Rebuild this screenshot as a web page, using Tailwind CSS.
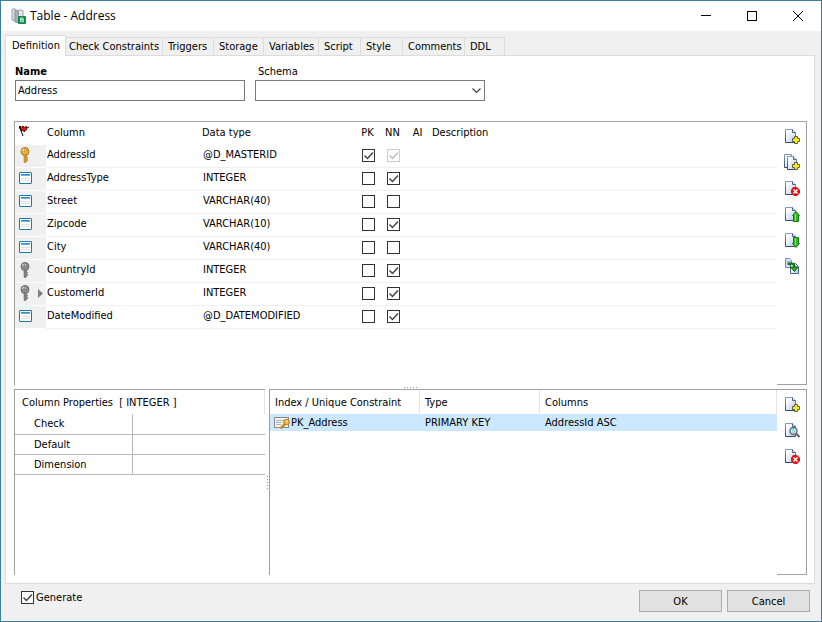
<!DOCTYPE html>
<html lang="en">
<head>
    <meta charset="UTF-8">
    <meta name="viewport" content="width=device-width, initial-scale=1.0">
    <title>Table - Address</title>
    <script src="https://cdn.jsdelivr.net/npm/@tailwindcss/browser@4"></script>
</head>
<body class="bg-[#f0f0f0] text-black text-[11px] leading-[14px] font-['Tahoma','DejaVu_Sans_Condensed','DejaVu_Sans',sans-serif]">
    <!-- Icon sprite -->
    <svg class="absolute w-0 h-0" aria-hidden="true">
        <defs>
            <linearGradient id="paper" x1="0" y1="0" x2="1" y2="1">
                <stop offset="0.2" stop-color="#ffffff"/>
                <stop offset="1" stop-color="#b4c6ee"/>
            </linearGradient>
            <linearGradient id="edge" x1="0" y1="0" x2="0" y2="1">
                <stop offset="0" stop-color="#8299bb"/>
                <stop offset="1" stop-color="#2f4a70"/>
            </linearGradient>
            <linearGradient id="bar" x1="0" y1="0" x2="0" y2="1">
                <stop offset="0" stop-color="#1c7cc4"/>
                <stop offset="1" stop-color="#7cc0ee"/>
            </linearGradient>
        </defs>
        <symbol id="page" viewBox="0 0 16 16">
            <path d="M1.5 1.5H8.5L11.5 4.5V14.5H1.5Z" fill="url(#paper)" stroke="url(#edge)"/>
            <path d="M8.5 1.5V4.5H11.5" fill="#dfe8f8" stroke="#4a6488"/>
        </symbol>
        <symbol id="plus" viewBox="0 0 16 16">
            <path d="M10.5 8.5h3v2h2v3h-2v2h-3v-2h-2v-3h2z" fill="#fff" stroke="#5c5a38"/>
            <path d="M12 9v6M9 12h6" stroke="#f8f000" stroke-width="2"/>
        </symbol>
        <symbol id="cross" viewBox="0 0 16 16">
            <path d="M9 7h4l3 3v3l-3 3H10l-3-3v-3z" fill="#e81010"/>
            <path d="M9.5 9.5l4 4M13.500 9.500l-4 4" stroke="#fff" stroke-width="1.5"/>
        </symbol>
        <symbol id="i-add" viewBox="0 0 16 16"><use href="#page"/><use href="#plus"/></symbol>
        <symbol id="i-copy" viewBox="0 0 16 16">
            <path d="M0.5 0.5H7.5V13.5H0.5Z" fill="url(#paper)" stroke="url(#edge)"/>
            <path d="M3.5 2.5H9.5L12.5 5.5V15.5H3.5Z" fill="url(#paper)" stroke="url(#edge)"/>
            <path d="M9.5 2.5V5.5H12.5" fill="#dfe8f8" stroke="#4a6488"/>
            <use href="#plus"/>
        </symbol>
        <symbol id="i-delete" viewBox="0 0 16 16"><use href="#page"/><use href="#cross"/></symbol>
        <symbol id="i-up" viewBox="0 0 16 16">
            <use href="#page"/>
            <path d="M12 5.5L15.5 9.5H14.5V15.5H9.5V9.5H8.5Z" fill="#34b822" stroke="#157a12"/>
            <path d="M11.5 8V15" stroke="#8ae070"/>
        </symbol>
        <symbol id="i-down" viewBox="0 0 16 16">
            <use href="#page"/>
            <path d="M12 15.5L15.5 11.5H14.5V5.5H9.5V11.5H8.5Z" fill="#34b822" stroke="#157a12"/>
            <path d="M11.5 6V13" stroke="#8ae070"/>
        </symbol>
        <symbol id="i-swap" viewBox="0 0 16 16">
            <path d="M1.5 0.5H5.5L7.5 2.5V9.5H1.5Z" fill="#dbe6fa" stroke="#7088b4"/>
            <path d="M3 4h3M3 6h3" stroke="#3a78d8"/>
            <path d="M6.5 5.5H11.5L14.5 8.5V15.5H6.5Z" fill="url(#paper)" stroke="#4a6488"/>
            <path d="M4 6.5C8 4.5 10.5 6 10.5 9" fill="none" stroke="#157a12" stroke-width="2.5"/>
            <path d="M6.5 9H14L10.5 13.5Z" fill="#2fae20" stroke="#126010"/>
        </symbol>
        <symbol id="i-find" viewBox="0 0 16 16">
            <use href="#page"/>
            <circle cx="9.5" cy="9" r="3.5" fill="#c8f0f4" stroke="#667078" stroke-width="1.5"/>
            <path d="M8 9l2-2M9 11l2-2" stroke="#38c4d0"/>
            <path d="M12 11.5L15.5 15" stroke="#606468" stroke-width="2"/>
        </symbol>
        <symbol id="i-field" viewBox="0 0 13 12">
            <rect x="0.5" y="0.5" width="12" height="11" rx="0.5" fill="#fff" stroke="#1a78b0"/>
            <rect x="2" y="2" width="9" height="2" fill="url(#bar)"/>
            <path d="M2 6.5h9M2 8.5h9" stroke="#e0e0e0"/>
        </symbol>
        <symbol id="i-key" viewBox="0 0 10 16">
            <circle cx="5" cy="4.5" r="4" fill="#e8ae3c" stroke="#b07c20"/>
            <path d="M2.5 4a2.5 2.5 0 0 1 2-2.2" fill="none" stroke="#fbe6a8" stroke-width="1.2"/>
            <circle cx="5.5" cy="3" r="1.1" fill="#fff" stroke="#946414" stroke-width="0.6"/>
            <path d="M4 8h2.5v2h1v1h-1v1.2h1.2v1.3H6.5V15L5.2 16 4 15Z" fill="#d89a28" stroke="#a87018" stroke-width="0.5"/>
        </symbol>
        <symbol id="i-fkey" viewBox="0 0 10 16">
            <circle cx="5" cy="4.5" r="4" fill="#8c8c8c" stroke="#6a6a6a"/>
            <path d="M2.5 4a2.5 2.5 0 0 1 2-2.2" fill="none" stroke="#d0d0d0" stroke-width="1.2"/>
            <circle cx="5.5" cy="3" r="1.1" fill="#fff" stroke="#555" stroke-width="0.6"/>
            <path d="M4 8h2.5v2h1v1h-1v1.2h1.2v1.3H6.5V15L5.2 16 4 15Z" fill="#808080" stroke="#606060" stroke-width="0.5"/>
        </symbol>
        <symbol id="i-tick" viewBox="0 0 13 13">
            <path d="M2.5 6.5L5.5 9.5L11 3.5" fill="none" stroke="currentColor" stroke-width="1.5"/>
        </symbol>
    </svg>

    <div class="min-h-screen flex flex-col border border-[#3c7f9f]">
        <header class="h-[30px] flex items-center bg-white pl-2.5">
            <svg class="w-4 h-4 mr-[3px]" viewBox="0 0 16 16">
                <path d="M1 1.5q2-1.500 4 0v10.500q-2 1-4 0z" fill="#d4d8e0" stroke="#9aa0ae"/>
                <path d="M4 3q2-1.500 4 0v11q-2 1-4 0z" fill="#a8aebc" stroke="#8c93a4"/>
                <path d="M7.5 2.500q2-1.500 4.500 0v9H7.5z" fill="#e4e7ee" stroke="#9aa0ae"/>
                <rect x="7" y="8" width="8" height="8" rx="1" fill="#12894a"/>
                <path d="M9.5 10h2.500v1.700H9.500zM9.500 11.700h3v2h-3z" fill="none" stroke="#c8ecd4"/>
            </svg>
            <h1 class="text-[12px] leading-4 font-['Segoe_UI','Open_Sans',sans-serif]">Table - Address</h1>
            <div class="ml-auto flex">
                <button type="button" aria-label="Minimize" class="w-[46px] h-[30px] grid place-items-center">
                    <svg class="w-2.5 h-2.5" viewBox="0 0 10 10"><path d="M0 4.5h10" stroke="#000"/></svg>
                </button>
                <button type="button" aria-label="Maximize" class="w-[46px] h-[30px] grid place-items-center">
                    <svg class="w-2.5 h-2.5" viewBox="0 0 10 10"><rect x="0.5" y="0.5" width="9" height="9" fill="none" stroke="#000"/></svg>
                </button>
                <button type="button" aria-label="Close" class="w-[46px] h-[30px] grid place-items-center">
                    <svg class="w-2.5 h-2.5" viewBox="0 0 10 10"><path d="M0 0l10 10M10 0L0 10" stroke="#000"/></svg>
                </button>
            </div>
        </header>

        <main class="flex-1 flex flex-col pt-1 pl-1 pr-1.5">
            <nav class="relative flex items-end -mb-px" role="tablist">
                <button type="button" role="tab" aria-selected="true" class="w-[61px] h-[21px] pl-1.5 pb-px text-left bg-white border border-b-0 border-[#dcdcdc]">Definition</button>
                <button type="button" role="tab" class="w-[97px] h-[18px] mb-px pl-[3px] pt-px text-left whitespace-nowrap border-t border-r border-[#dcdcdc]">Check Constraints</button>
                <button type="button" role="tab" class="w-[51px] h-[18px] mb-px pl-[5px] pt-px text-left border-t border-r border-[#dcdcdc]">Triggers</button>
                <button type="button" role="tab" class="w-[50px] h-[18px] mb-px pl-[5px] pt-px text-left border-t border-r border-[#dcdcdc]">Storage</button>
                <button type="button" role="tab" class="w-[55px] h-[18px] mb-px pl-[5px] pt-px text-left border-t border-r border-[#dcdcdc]">Variables</button>
                <button type="button" role="tab" class="w-[42px] h-[18px] mb-px pl-[5px] pt-px text-left border-t border-r border-[#dcdcdc]">Script</button>
                <button type="button" role="tab" class="w-[42px] h-[18px] mb-px pl-[5px] pt-px text-left border-t border-r border-[#dcdcdc]">Style</button>
                <button type="button" role="tab" class="w-[62px] h-[18px] mb-px pl-[5px] pt-px text-left border-t border-r border-[#dcdcdc]">Comments</button>
                <button type="button" role="tab" class="w-[40px] h-[18px] mb-px pl-[5px] pt-px text-left border-t border-r border-[#dcdcdc]">DDL</button>
            </nav>

            <section class="flex-1 flex flex-col bg-white border border-[#dcdcdc] pt-2 pb-2 pl-2 pr-[7px]">
                <div class="flex gap-2.5 pl-px mb-5">
                    <div class="w-[230px]">
                        <label for="name" class="block h-4 pt-px font-bold">Name</label>
                        <input id="name" type="text" value="Address" class="block w-full h-[21px] px-0.5 bg-white border border-[#7a7a7a] outline-none">
                    </div>
                    <div class="w-[230px]">
                        <label for="schema" class="block h-4 pt-px pl-[3px]">Schema</label>
                        <div class="relative">
                            <select id="schema" class="block w-full h-[21px] px-0.5 appearance-none bg-white border border-[#7a7a7a] outline-none">
                                <option></option>
                            </select>
                            <svg class="absolute right-1 top-2 w-[9px] h-1.5 pointer-events-none" viewBox="0 0 9 6"><path d="M0.5 0.5l4 4 4-4" fill="none" stroke="#444" stroke-width="1.2"/></svg>
                        </div>
                    </div>
                </div>

                <!-- Columns -->
                <div class="flex-1 flex border-t border-l border-[#a0a0a0]">
                    <div class="flex-1">
                        <table class="w-full table-fixed border-separate border-spacing-0">
                            <colgroup>
                                <col class="w-[31px]">
                                <col class="w-[156px]">
                                <col class="w-[154px]">
                                <col class="w-[25px]">
                                <col class="w-[25px]">
                                <col class="w-[25px]">
                                <col>
                            </colgroup>
                            <thead>
                                <tr class="h-[23px] text-left align-top">
                                    <th class="p-0 pl-1 pt-1">
                                        <svg class="w-2.5 h-2.5" viewBox="0 0 10 10"><path d="M0 0.500L9.500 1L6 5.500L2 4.500Z" fill="#d01818" stroke="#200" stroke-dasharray="2 1"/><path d="M0.5 0.5l3.500 9.500" stroke="#000"/></svg>
                                    </th>
                                    <th class="p-0 pl-px pt-1 font-normal">Column</th>
                                    <th class="p-0 pt-1 font-normal">Data type</th>
                                    <th class="p-0 pr-0.5 pt-1 font-normal text-center">PK</th>
                                    <th class="p-0 pr-0.5 pt-1 font-normal text-center">NN</th>
                                    <th class="p-0 pr-0.5 pt-1 font-normal text-center">AI</th>
                                    <th class="p-0 pl-px pt-1 font-normal">Description</th>
                                </tr>
                            </thead>
                            <tbody id="columns"></tbody>
                        </table>
                    </div>
                    <div class="w-[30px] flex flex-col items-center gap-2.5 pt-1.5 border-r border-b border-[#a0a0a0]">
                        <button type="button" aria-label="Add column"><svg class="block w-4 h-4"><use href="#i-add"/></svg></button>
                        <button type="button" aria-label="Duplicate column"><svg class="block w-4 h-4"><use href="#i-copy"/></svg></button>
                        <button type="button" aria-label="Delete column"><svg class="block w-4 h-4"><use href="#i-delete"/></svg></button>
                        <button type="button" aria-label="Move up"><svg class="block w-4 h-4"><use href="#i-up"/></svg></button>
                        <button type="button" aria-label="Move down"><svg class="block w-4 h-4"><use href="#i-down"/></svg></button>
                        <button type="button" aria-label="Copy from table"><svg class="block w-4 h-4"><use href="#i-swap"/></svg></button>
                    </div>
                </div>

                <div class="h-1 flex items-center justify-center">
                    <svg class="w-[13px] h-px" viewBox="0 0 13 1"><path d="M0 0.5h13" stroke="#909090" stroke-dasharray="1 2"/></svg>
                </div>

                <div class="min-h-[186px] flex">
                    <!-- Column properties -->
                    <div class="w-[251px] border-t border-l border-[#a0a0a0]">
                        <h2 class="h-6 pl-[7px] pt-1.5 border-r border-[#e4e4e4]">Column Properties <span class="ml-[3px]">[ INTEGER ]</span></h2>
                        <table class="w-full table-fixed border-separate border-spacing-0">
                            <tbody>
                                <tr class="h-[21px]">
                                    <th class="w-[118px] p-0 pl-[19px] text-left font-normal border-r border-b border-[#b8b8b8]">Check</th>
                                    <td class="p-0 border-b border-[#b8b8b8]"></td>
                                </tr>
                                <tr class="h-5">
                                    <th class="p-0 pl-[19px] text-left font-normal border-r border-b border-[#b8b8b8]">Default</th>
                                    <td class="p-0 border-b border-[#b8b8b8]"></td>
                                </tr>
                                <tr class="h-5">
                                    <th class="p-0 pl-[19px] text-left font-normal border-r border-b border-[#b8b8b8]">Dimension</th>
                                    <td class="p-0 border-b border-[#b8b8b8]"></td>
                                </tr>
                            </tbody>
                        </table>
                    </div>

                    <div class="w-1 flex items-center justify-center">
                        <svg class="w-px h-[13px]" viewBox="0 0 1 13"><path d="M0.5 0v13" stroke="#909090" stroke-dasharray="1 2"/></svg>
                    </div>

                    <!-- Indexes -->
                    <div class="flex-1 flex border-t border-l border-[#a0a0a0]">
                        <div class="flex-1">
                            <table class="w-full table-fixed border-separate border-spacing-0">
                                <thead>
                                    <tr class="h-6 text-left">
                                        <th class="w-[150px] p-0 pl-[5px] pt-0.5 font-normal whitespace-nowrap border-r border-[#e4e4e4]">Index / Unique Constraint</th>
                                        <th class="w-[120px] p-0 pl-[5px] pt-0.5 font-normal border-r border-[#e4e4e4]">Type</th>
                                        <th class="p-0 pl-[5px] pt-0.5 font-normal border-r border-[#e4e4e4]">Columns</th>
                                    </tr>
                                </thead>
                                <tbody>
                                    <tr class="h-[17px] bg-[#cce8ff]">
                                        <td class="p-0 pl-1 pt-px">
                                            <div class="flex items-center gap-px">
                                                <svg class="w-4 h-3" viewBox="0 0 16 12">
                                                    <rect x="0.5" y="0.5" width="14" height="10" fill="#f4f4f4" stroke="#8a8a8a"/>
                                                    <path d="M2 3.5h8M2 5.5h6M2 7.5h5" stroke="#b0b0b0"/>
                                                    <path d="M6.5 11.5L11 7" stroke="#c88a1c" stroke-width="2.5"/>
                                                    <circle cx="12.5" cy="5" r="2.8" fill="#f0b840" stroke="#b87c18"/>
                                                    <circle cx="13" cy="4.5" r="0.8" fill="#fff"/>
                                                </svg>
                                                PK_Address
                                            </div>
                                        </td>
                                        <td class="p-0 pl-[5px] pt-px">PRIMARY KEY</td>
                                        <td class="p-0 pl-[5px] pt-px">AddressId ASC</td>
                                    </tr>
                                </tbody>
                            </table>
                        </div>
                        <div class="w-[30px] flex flex-col items-center gap-2.5 pt-1.5 border-r border-b border-[#a0a0a0]">
                            <button type="button" aria-label="Add index"><svg class="block w-4 h-4"><use href="#i-add"/></svg></button>
                            <button type="button" aria-label="View index"><svg class="block w-4 h-4"><use href="#i-find"/></svg></button>
                            <button type="button" aria-label="Delete index"><svg class="block w-4 h-4"><use href="#i-delete"/></svg></button>
                        </div>
                    </div>
                </div>
            </section>
        </main>

        <footer class="flex items-start pt-1.5 pb-[9px] pl-5 pr-[11px]">
            <label class="flex items-start gap-0.5 pt-px">
                <span class="relative block w-[13px] h-[13px]">
                    <input type="checkbox" checked class="peer block w-[13px] h-[13px] appearance-none bg-white border border-[#333]">
                    <svg class="absolute inset-0 hidden peer-checked:block w-[13px] h-[13px] text-[#444] pointer-events-none"><use href="#i-tick"/></svg>
                </span>
                Generate
            </label>
            <div class="ml-auto flex gap-[5px]">
                <button type="button" class="w-[83px] h-[22px] pt-px bg-[#e1e1e1] border border-[#adadad]">OK</button>
                <button type="button" class="w-[83px] h-[22px] pt-px bg-[#e1e1e1] border border-[#adadad]">Cancel</button>
            </div>
        </footer>
    </div>

    <script>
        const columns = [
            { name: "AddressId", type: "@D_MASTERID", icon: "key", pk: true, nn: true, locked: true },
            { name: "AddressType", type: "INTEGER", icon: "field", pk: false, nn: true },
            { name: "Street", type: "VARCHAR(40)", icon: "field", pk: false, nn: false },
            { name: "Zipcode", type: "VARCHAR(10)", icon: "field", pk: false, nn: true },
            { name: "City", type: "VARCHAR(40)", icon: "field", pk: false, nn: false },
            { name: "CountryId", type: "INTEGER", icon: "fkey", pk: false, nn: true },
            { name: "CustomerId", type: "INTEGER", icon: "fkey", pk: false, nn: true, current: true },
            { name: "DateModified", type: "@D_DATEMODIFIED", icon: "field", pk: false, nn: true }
        ];

        const checkbox = (label, checked, disabled) => `
            <span class="relative block w-[13px] h-[13px] mx-auto">
                <input type="checkbox" aria-label="${label}" ${checked ? "checked" : ""} ${disabled ? "disabled" : ""} class="peer block w-[13px] h-[13px] appearance-none bg-white border border-[#333] disabled:border-[#ccc]">
                <svg class="absolute inset-0 hidden peer-checked:block w-[13px] h-[13px] text-[#444] peer-disabled:text-[#bbb] pointer-events-none"><use href="#i-tick"/></svg>
            </span>`;

        document.getElementById("columns").innerHTML = columns.map((c) => `
            <tr class="h-[23px]">
                <td class="p-0 pl-1 pb-0.5 bg-[#f0f0f0] border-b border-white">
                    <div class="flex items-center">
                        <span class="w-[13px] h-4 flex items-center ${c.icon === "field" ? "" : "pl-px"}">
                            ${c.icon === "field"
                                ? '<svg class="w-[13px] h-3"><use href="#i-field"/></svg>'
                                : `<svg class="w-2.5 h-4"><use href="#i-${c.icon}"/></svg>`}
                        </span>
                        ${c.current ? '<svg class="w-[5px] h-[9px] ml-1.5" viewBox="0 0 5 9"><path d="M0 0l5 4.5L0 9z" fill="#808080"/></svg>' : ""}
                    </div>
                </td>
                <td class="p-0 pl-px pb-[3px] border-b border-[#f0f0f0]">${c.name}</td>
                <td class="p-0 pl-px pb-[3px] border-b border-[#f0f0f0]">${c.type}</td>
                <td class="p-0 pb-px border-b border-[#f0f0f0]">${checkbox(c.name + " primary key", c.pk, false)}</td>
                <td class="p-0 pb-px border-b border-[#f0f0f0]">${checkbox(c.name + " not null", c.nn, c.locked)}</td>
                <td class="p-0 border-b border-[#f0f0f0]"></td>
                <td class="p-0 border-b border-[#f0f0f0]"></td>
            </tr>`).join("");
    </script>
</body>
</html>
